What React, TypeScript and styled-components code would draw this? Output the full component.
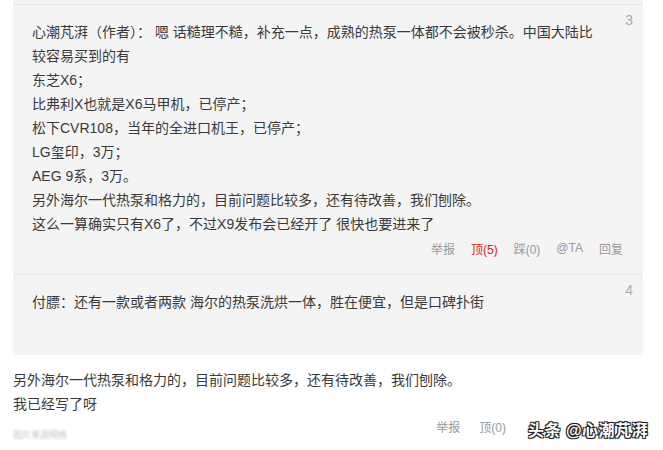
import { styled, createGlobalStyle } from 'styled-components';

const GlobalStyle = createGlobalStyle`
  body {
    margin: 0;
    background: #fff;
    font-family: 'Liberation Sans', 'Noto Sans CJK SC', sans-serif;
  }
`;

interface IComment {
  floor: number;
  author: string;
  lines: string[];
  up?: number;
  down?: number;
  showActions: boolean;
}

const comments: IComment[] = [
  {
    floor: 3,
    author: '心潮芃湃（作者）： ',
    lines: [
      '嗯 话糙理不糙，补充一点，成熟的热泵一体都不会被秒杀。中国大陆比',
      '较容易买到的有',
      '东芝X6；',
      '比弗利X也就是X6马甲机，已停产；',
      '松下CVR108，当年的全进口机王，已停产；',
      'LG玺印，3万；',
      'AEG 9系，3万。',
      '另外海尔一代热泵和格力的，目前问题比较多，还有待改善，我们刨除。',
      '这么一算确实只有X6了，不过X9发布会已经开了 很快也要进来了',
    ],
    up: 5,
    down: 0,
    showActions: true,
  },
  {
    floor: 4,
    author: '付膘：',
    lines: ['还有一款或者两款 海尔的热泵洗烘一体，胜在便宜，但是口碑扑街'],
    showActions: false,
  },
];

function App() {
  return (
    <Page>
      <GlobalStyle />
      <QuoteBox>
        {comments.map((c) => (
          <Item key={c.floor} $last={!c.showActions}>
            <Floor>{c.floor}</Floor>
            <Text>
              {c.author}
              {c.lines.map((line, i) => (
                <span key={i}>
                  {i > 0 && <br />}
                  {line}
                </span>
              ))}
            </Text>
            {c.showActions && (
              <Actions>
                <Action>举报</Action>
                <Action $hot>顶({c.up})</Action>
                <Action>踩({c.down})</Action>
                <Action>@TA</Action>
                <Action>回复</Action>
              </Actions>
            )}
          </Item>
        ))}
      </QuoteBox>
      <Reply>
        另外海尔一代热泵和格力的，目前问题比较多，还有待改善，我们刨除。
        <br />
        我已经写了呀
      </Reply>
      <Footer>
        <Source>图片来源网络</Source>
        <FooterRight>
          <Action>举报</Action>
          <Action>顶(0)</Action>
          <Watermark>头条 @心潮芃湃</Watermark>
        </FooterRight>
      </Footer>
    </Page>
  );
}

const Page = styled.div`
  width: 663px;
  height: 450px;
  overflow: hidden;
  padding-left: 13px;
  box-sizing: border-box;
`;

const QuoteBox = styled.div`
  width: 630px;
  background: #f4f4f4;
  padding-top: 4px;
`;

const Item = styled.div<{ $last?: boolean }>`
  position: relative;
  border-top: 1px solid #e8e8e8;
  padding: 15px 20px ${({ $last }) => ($last ? '41px' : '14px')} 19px;
`;

const Floor = styled.span`
  position: absolute;
  top: 3px;
  right: 10px;
  font-size: 14px;
  line-height: 24px;
  color: #aaa;
`;

const Text = styled.div`
  font-size: 14px;
  line-height: 24px;
  color: #3a3a3a;
  white-space: nowrap;
`;

const Actions = styled.div`
  display: flex;
  justify-content: flex-end;
  gap: 16px;
  height: 24px;
  align-items: center;
`;

const Action = styled.span<{ $hot?: boolean }>`
  font-size: 12px;
  color: ${({ $hot }) => ($hot ? '#d62222' : '#999')};
`;

const Reply = styled.div`
  margin-top: 13px;
  font-size: 14px;
  line-height: 24px;
  color: #3a3a3a;
  white-space: nowrap;
`;

const Footer = styled.div`
  display: flex;
  justify-content: space-between;
  width: 635px;
  height: 28px;
`;

const Source = styled.span`
  align-self: flex-end;
  font-size: 9px;
  color: #c4c4c4;
  filter: blur(0.9px);
  margin-bottom: 3px;
`;

const FooterRight = styled.div`
  display: flex;
  gap: 19px;
  align-items: flex-start;
  padding-top: 2px;

  > span:first-child + span {
    margin-right: 3px;
  }
`;

const Watermark = styled.span`
  font-size: 16px;
  font-weight: 700;
  color: #fff;
  margin-top: -1px;
  letter-spacing: 0.5px;
  text-shadow: -1px -1px 0 #222, 1px -1px 0 #222, -1px 1px 0 #222,
    1px 1px 0 #222, 0 0 2px #000;
`;

export default App;
